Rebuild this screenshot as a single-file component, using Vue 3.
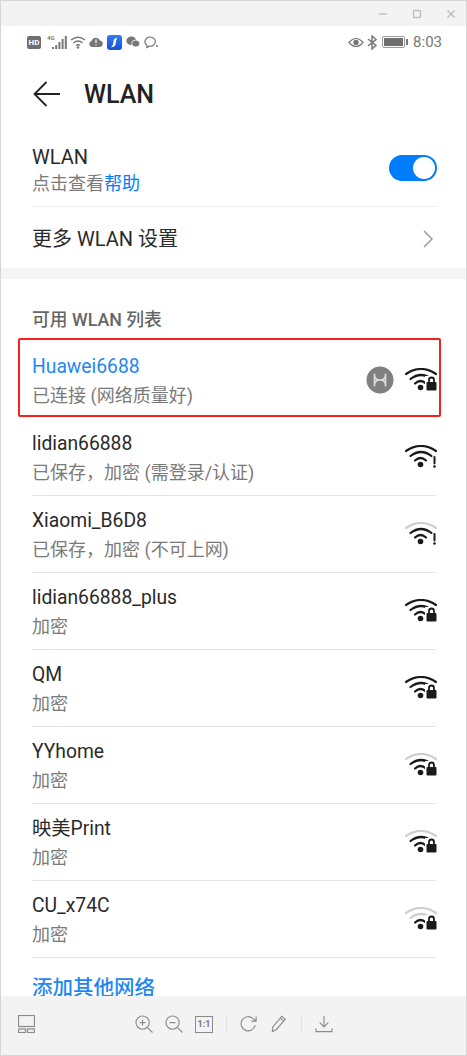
<script setup>
const networks = [
  { name: 'Huawei6688', status: '已连接 (网络质量好)', level: 3, badge: 'lock', connected: true },
  { name: 'lidian66888', status: '已保存，加密 (需登录/认证)', level: 3, badge: 'warn' },
  { name: 'Xiaomi_B6D8', status: '已保存，加密 (不可上网)', level: 2, badge: 'warn' },
  { name: 'lidian66888_plus', status: '加密', level: 3, badge: 'lock' },
  { name: 'QM', status: '加密', level: 3, badge: 'lock' },
  { name: 'YYhome', status: '加密', level: 2, badge: 'lock' },
  { name: '映美Print', status: '加密', level: 2, badge: 'lock' },
  { name: 'CU_x74C', status: '加密', level: 1, badge: 'lock' }
]
</script>

<template>
  <div class="window">
    <div class="titlebar">
      <svg class="win-icon" viewBox="0 0 12 12"><path d="M2 6h8" /></svg>
      <svg class="win-icon" viewBox="0 0 12 12"><rect x="2.5" y="2.5" width="7" height="7" rx="1" /></svg>
      <svg class="win-icon" viewBox="0 0 12 12"><path d="M2.5 2.5l7 7M9.5 2.5l-7 7" /></svg>
    </div>

    <div class="screen">
      <div class="statusbar">
        <span class="hd">HD</span>
        <span class="net"><i class="net-label">4G</i>
          <svg class="signal" viewBox="0 0 15 13"><path d="M0 13v-2h2v2zM3.200 13V9h2v4zM6.400 13V6h2v7zM9.600 13V3h2v10zM12.800 13V0h2v13z" /></svg>
        </span>
        <svg class="st-wifi" viewBox="0 0 16 13" fill="none"><path d="M1 4Q8-1.500 15 4M3.500 7Q8 3 12.500 7M6 9.500Q8 8 10 9.500" /><circle cx="8" cy="11.500" r="1.300" /></svg>
        <svg class="st-cloud" viewBox="0 0 14 10"><path d="M3 10a3 3 0 0 1-.5-5.900A4.500 4.500 0 0 1 11 3.500 3.300 3.300 0 0 1 11 10z" /><path class="cut" d="M7 2.500v3.500M7 7.200v1" /></svg>
        <span class="app-blue"><svg viewBox="0 0 14 14"><path d="M9.500 2.500Q6 3 6 6.500 6 8 5 10L3.500 11.500Q8 11.500 8.200 7.500 8.300 5 9.500 2.500z" /></svg></span>
        <svg class="st-chat" viewBox="0 0 14 12"><ellipse cx="5.300" cy="4.800" rx="5" ry="4.300" /><ellipse class="front" cx="9.700" cy="7.500" rx="4" ry="3.500" /></svg>
        <svg class="st-bubble" viewBox="0 0 15 13" fill="none"><path d="M6.500 1a5.300 4.600 0 0 0-3.500 8.200L2.800 11.500 5.500 10.200a5.300 4.600 0 1 0 1-9.200z" /><circle class="dot" cx="13" cy="10" r="1" /></svg>
        <span class="status-right">
          <svg class="st-eye" viewBox="0 0 16 11" fill="none"><path d="M1 5.500Q8-2.500 15 5.500 8 13.500 1 5.500z" /><circle class="pupil" cx="8" cy="5.500" r="2.700" /></svg>
          <svg class="st-bt" viewBox="0 0 10 15" fill="none"><path d="M1 4l8 6.500-4 3.500V1l4 3.500L1 11" /></svg>
          <span class="battery"><span class="battery-fill"></span></span>
          <span class="clock">8:03</span>
        </span>
      </div>

      <header class="header">
        <svg class="back" viewBox="0 0 28 26" fill="none"><path d="M13.500 1L1.500 13l12 12M1.500 13H27" /></svg>
        <h1>WLAN</h1>
      </header>

      <div class="setting toggle-row">
        <div class="toggle-text">
          <div class="name">WLAN</div>
          <div class="sub">点击查看<span class="link">帮助</span></div>
        </div>
        <span class="switch"><span class="knob"></span></span>
      </div>
      <div class="setting more-row">
        <span class="name">更多 WLAN 设置</span>
        <svg class="chevron" viewBox="0 0 10 18" fill="none"><path d="M1 1l8 8-8 8" /></svg>
      </div>

      <div class="gap"></div>

      <div class="section-label">可用 WLAN 列表</div>

      <div
        v-for="net in networks"
        :key="net.name"
        class="network"
        :class="{ connected: net.connected }"
      >
        <div class="network-text">
          <div class="name">{{ net.name }}</div>
          <div class="sub">{{ net.status }}</div>
        </div>
        <svg v-if="net.connected" class="hw-badge" viewBox="0 0 28 28" fill="none">
          <circle class="hw-disc" cx="14" cy="14" r="13.500" />
          <path d="M8.500 7.500v13M19.500 7.500v13M8.500 9.500Q9 14 14 14t5.500 4.500M19.500 9.500Q19 14 14 14t-5.500 4.500" />
        </svg>
        <svg class="wifi" viewBox="0 0 32 24" fill="none">
          <path :class="net.level >= 3 ? 'on' : 'off'" d="M1 6Q16-4 31 6" />
          <path :class="net.level >= 2 ? 'on' : 'off'" d="M5.500 11Q16 3 26.500 11" />
          <path :class="net.level >= 1 ? 'on' : 'off'" d="M10 15.500Q15.500 10.500 21 15.500" />
          <circle class="wifi-dot" cx="15.500" cy="19.500" r="2.800" />
          <template v-if="net.badge === 'lock'">
            <rect class="lock-halo" x="20" y="8" width="12" height="16" />
            <path class="shackle" d="M24 15v-3a2.500 2.500 0 0 1 5 0v3" />
            <rect class="lock-body" x="21.500" y="14" width="10" height="8.500" rx="1" />
          </template>
          <template v-else>
            <path class="warn-mark" d="M29.500 12v6.500" />
            <circle class="wifi-dot" cx="29.500" cy="21.500" r="1.300" />
          </template>
        </svg>
      </div>

      <div class="add-network">添加其他网络</div>
    </div>

    <footer class="toolbar">
      <svg class="tool tool-layout" viewBox="0 0 17 18"><rect x=".5" y=".5" width="16" height="11" /><rect x=".5" y="14" width="7" height="3.500" /><rect x="9.500" y="14" width="7" height="3.500" /></svg>
      <div class="tool-group">
        <svg class="tool" viewBox="0 0 19 19"><circle cx="8" cy="8" r="7" /><path d="M13 13l5.500 5.500M5 8h6M8 5v6" /></svg>
        <svg class="tool" viewBox="0 0 19 19"><circle cx="8" cy="8" r="7" /><path d="M13 13l5.500 5.500M5 8h6" /></svg>
        <span class="one-to-one">1:1</span>
        <span class="tool-sep"></span>
        <svg class="tool" viewBox="0 0 19 19"><path d="M16 11a7.500 7.500 0 1 1-2.500-7.500L16.500 6M17 1.500V6.500h-5" /></svg>
        <svg class="tool" viewBox="0 0 19 19"><path d="M3 12.500L12.500 1.500l3.500 3L6.500 15.500 2.500 17.500zM11 3.500l3.500 3" /></svg>
        <span class="tool-sep"></span>
        <svg class="tool" viewBox="0 0 19 19"><path d="M9.500 1v11M5 8l4.500 4.500L14 8M1 14v3.500h17V14" /></svg>
      </div>
    </footer>
  </div>
</template>

<style>
html, body { margin: 0; background: #fff; }
</style>

<style scoped>
.window {
  width: 467px;
  height: 1056px;
  box-sizing: border-box;
  display: flex;
  flex-direction: column;
  overflow: hidden;
  border: 1px solid #d6d6d6;
  background: #fff;
  font-family: Roboto, "Noto Sans CJK SC", sans-serif;
}

.titlebar {
  height: 25px;
  flex: none;
  display: flex;
  justify-content: flex-end;
  align-items: center;
  gap: 22px;
  padding-right: 9px;
  background: #f3f3f3;
}
.win-icon {
  width: 12px;
  height: 12px;
  fill: none;
  stroke: #bdbdbd;
  stroke-width: 1.300;
}

.screen {
  flex: 1;
  min-height: 0;
  overflow: hidden;
}

.statusbar {
  height: 32px;
  display: flex;
  align-items: center;
  padding: 0 24px 0 26px;
  color: #777;
}
.statusbar svg { flex: none; }
.hd {
  width: 14px;
  height: 13px;
  margin-right: 4px;
  border-radius: 2px;
  background: #6f6f6f;
  color: #fff;
  font-size: 8px;
  font-weight: 700;
  line-height: 13px;
  text-align: center;
}
.net {
  position: relative;
  width: 22px;
  height: 14px;
  margin-right: 3px;
}
.net-label {
  position: absolute;
  left: 2px;
  top: -1px;
  font-size: 6px;
  font-style: normal;
  font-weight: 700;
}
.signal {
  position: absolute;
  right: 0;
  bottom: 0;
  width: 15px;
  height: 13px;
  fill: #777;
}
.st-wifi {
  width: 16px;
  height: 13px;
  margin-right: 3px;
  stroke: #777;
  stroke-width: 1.300;
}
.st-wifi circle { fill: #777; stroke: none; }
.st-cloud {
  width: 14px;
  height: 10px;
  margin-right: 4px;
  fill: #777;
}
.st-cloud .cut { fill: none; stroke: #fff; stroke-width: 1.200; }
.app-blue {
  width: 15px;
  height: 15px;
  margin-right: 4px;
  border-radius: 3px;
  background: linear-gradient(#2f7df0, #1550d8);
}
.app-blue svg { display: block; fill: #fff; }
.st-chat {
  width: 14px;
  height: 12px;
  margin-right: 4px;
  fill: #777;
}
.st-chat .front { stroke: #fff; stroke-width: .8; }
.st-bubble {
  width: 15px;
  height: 13px;
  stroke: #777;
  stroke-width: 1.200;
}
.st-bubble .dot { fill: #777; stroke: none; }
.status-right {
  margin-left: auto;
  display: flex;
  align-items: center;
}
.st-eye {
  width: 16px;
  height: 11px;
  margin-right: 3px;
  stroke: #777;
  stroke-width: 1.200;
}
.st-eye .pupil { fill: #777; stroke: none; }
.st-bt {
  width: 10px;
  height: 15px;
  margin-right: 5px;
  stroke: #777;
  stroke-width: 1.500;
}
.battery {
  position: relative;
  box-sizing: border-box;
  width: 23px;
  height: 12px;
  margin-right: 8px;
  padding: 1px;
  border: 1px solid #9a9a9a;
  border-radius: 2px;
}
.battery::after {
  content: "";
  position: absolute;
  right: -4px;
  top: 2px;
  width: 2px;
  height: 6px;
  background: #777;
}
.battery-fill {
  display: block;
  height: 100%;
  background: #6f6f6f;
}
.clock { font-size: 15px; color: #777; }

.header {
  height: 72px;
  display: flex;
  align-items: center;
  padding: 0 0 0 32px;
}
.back {
  width: 28px;
  height: 26px;
  margin-right: 23px;
  stroke: #222;
  stroke-width: 1.800;
}
.header h1 {
  margin: 0;
  font-size: 25px;
  font-weight: 500;
  color: #222;
}

.setting {
  margin: 0 30px 0 31px;
  display: flex;
  justify-content: space-between;
  align-items: center;
}
.toggle-row {
  height: 76px;
  border-bottom: 1px solid #eee;
}
.toggle-text { padding-top: 5px; }
.toggle-row .name { font-size: 20px; }
.more-row { height: 61px; padding-top: 2px; box-sizing: border-box; }
.more-row .name { font-size: 20px; }
.name {
  font-size: 19.300px;
  line-height: 26px;
  color: #2a2a2a;
}
.sub {
  font-size: 18px;
  line-height: 27px;
  color: #7a7a7a;
}
.link { color: #007dff; }
.switch {
  box-sizing: border-box;
  width: 48px;
  height: 26px;
  margin-right: -1px;
  padding: 2px;
  display: flex;
  justify-content: flex-end;
  border-radius: 13px;
  background: #007dff;
}
.knob {
  width: 22px;
  height: 22px;
  border-radius: 50%;
  background: #fff;
}
.chevron {
  width: 10px;
  height: 18px;
  margin-right: 3px;
  stroke: #999;
  stroke-width: 1.500;
}

.gap {
  height: 11px;
  background: #f4f4f4;
}

.section-label {
  height: 63px;
  box-sizing: border-box;
  padding: 29px 0 0 31px;
  font-size: 17.800px;
  line-height: 24px;
  font-weight: 500;
  color: #666;
}

.network {
  position: relative;
  box-sizing: border-box;
  height: 77px;
  margin: 0 30px 0 31px;
  display: flex;
  align-items: center;
  border-bottom: 1px solid #e4e4e4;
}
.network-text {
  flex: 1;
  min-width: 0;
  padding-top: 3px;
}
.network .name { line-height: 28px; }
.network .sub { line-height: 29px; }
.connected { border-bottom-color: transparent; }
.connected .name { color: #1f87f5; }
/* red annotation drawn over the first row */
.connected::after {
  content: "";
  position: absolute;
  left: -14px;
  right: -5px;
  top: -4px;
  bottom: 1px;
  border: 2px solid #f5221b;
  border-radius: 2px;
}
.hw-badge {
  width: 28px;
  height: 28px;
  margin-right: 11px;
  stroke: #ddd;
  stroke-width: 1.600;
}
.hw-disc { fill: #808080; stroke: none; }
.wifi {
  flex: none;
  width: 32px;
  height: 24px;
  margin-right: -1px;
  stroke-width: 2.200;
  stroke-linecap: round;
}
.wifi .on { stroke: #1a1a1a; }
.wifi .off { stroke: #cfcfcf; }
.wifi-dot { fill: #1a1a1a; stroke: none; }
.lock-halo { fill: #fff; stroke: none; }
.lock-body { fill: #1a1a1a; stroke: none; }
.shackle { stroke: #1a1a1a; stroke-width: 1.800; }
.warn-mark { stroke: #1a1a1a; stroke-width: 2; }

.add-network {
  padding: 16px 0 0 31px;
  font-size: 20.500px;
  line-height: 28px;
  font-weight: 500;
  color: #1f87f5;
}

.toolbar {
  height: 59px;
  flex: none;
  position: relative;
  display: flex;
  align-items: flex-start;
  justify-content: center;
  background: #f3f3f3;
}
.tool {
  width: 18px;
  height: 18px;
  fill: none;
  stroke: #8a8a8a;
  stroke-width: 1.200;
}
.tool-layout {
  position: absolute;
  left: 17px;
  top: 19px;
  width: 17px;
  height: 18px;
}
.tool-group {
  display: flex;
  align-items: center;
  gap: 12px;
  margin-top: 19px;
  margin-left: 1px;
}
.one-to-one {
  box-sizing: border-box;
  width: 18px;
  height: 17px;
  border: 1.500px solid #8a8a8a;
  font-size: 9px;
  line-height: 14px;
  font-weight: 700;
  color: #777;
  text-align: center;
}
.tool-sep {
  width: 1px;
  height: 16px;
  margin: 0 1px;
  background: #e2e2e2;
}
</style>
